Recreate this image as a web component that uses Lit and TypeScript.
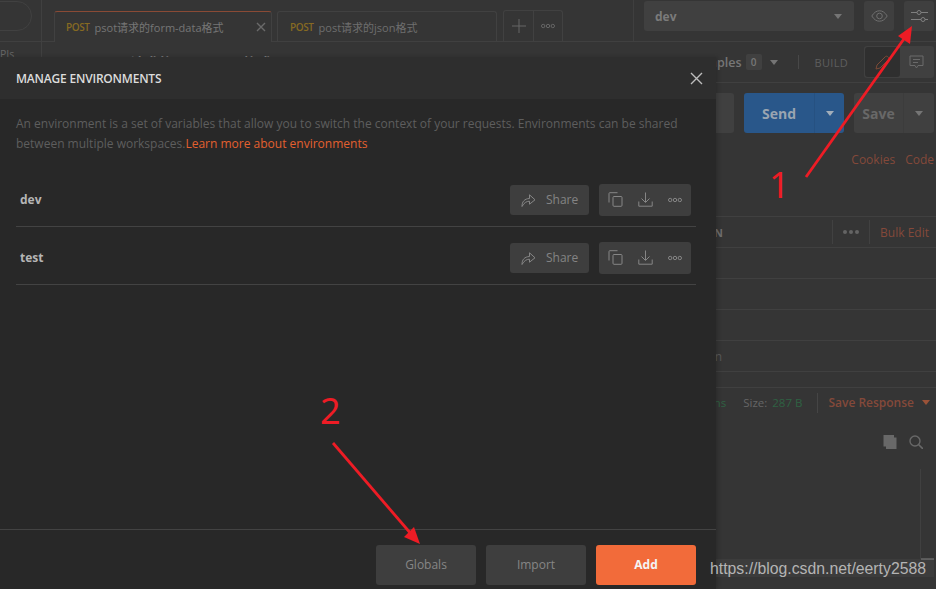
import { LitElement, html, css, svg } from 'lit';
import { customElement } from 'lit/decorators.js';

const icon = (w: number, h: number, body: unknown, cls = '') =>
  html`<svg class=${cls} width=${w} height=${h} viewBox="0 0 ${w} ${h}" fill="none" stroke="currentColor" stroke-width="1">${body}</svg>`;

const shareIcon = () => icon(15, 14, svg`<path d="M1 13.5C1 8.5 3.5 5.8 8.5 5.5V1.8L14 6.8L8.5 11.2V8.2C5.5 8.2 3 9.8 1 13.5Z" stroke-linejoin="round"/>`);
const copyIcon = () => icon(15, 15, svg`<path d="M1 10.5V1.5Q1 .7 1.8 .7H9.5"/><rect x="5" y="4.5" width="9" height="9.8" rx="1"/>`);
const downloadIcon = () => icon(15, 15, svg`<path d="M7.5 .5V10M3.5 6.5L7.5 10.5L11.5 6.5M.8 9.5V14.2H14.2V9.5"/>`);
const dotsIcon = () => icon(14, 6, svg`<circle cx="2.2" cy="3" r="1.7"/><circle cx="7" cy="3" r="1.7"/><circle cx="11.8" cy="3" r="1.7"/>`);
const closeIcon = (s: number) => icon(s, s, svg`<path d="M1 1L${s - 1} ${s - 1}M${s - 1} 1L1 ${s - 1}" stroke-width="1.4"/>`);
const caret = (cls = '') => html`<span class="caret ${cls}"></span>`;

@customElement('app-root')
export class AppRoot extends LitElement {
  static styles = css`
    :host {
      display: block;
      width: 936px;
      height: 589px;
      font-family: 'Open Sans', 'Noto Sans CJK SC', sans-serif;
      font-size: 13px;
      color: #7a7a7a;
    }
    .app {
      position: relative;
      width: 936px;
      height: 589px;
      overflow: hidden;
      background: #353535;
    }

    /* top bar */
    .topbar {
      display: flex;
      height: 41px;
      border-bottom: 1px solid #404040;
      box-sizing: content-box;
    }
    .side-top {
      flex: none;
      width: 42px;
      height: 41px;
      border-right: 1px solid #404040;
      box-sizing: border-box;
      overflow: hidden;
      padding-top: 1px;
    }
    .pill {
      width: 52px;
      height: 30px;
      margin-left: -20px;
      border: 1px solid #414141;
      border-radius: 15px;
      box-sizing: border-box;
    }
    .tabs {
      display: flex;
      align-items: flex-end;
      margin-left: 12px;
      height: 42px;
    }
    .tab {
      display: flex;
      align-items: center;
      height: 30px;
      padding-left: 12px;
      border: 1px solid #414141;
      border-bottom: 0;
      border-radius: 3px 3px 0 0;
      box-sizing: border-box;
      color: #6e6e6e;
      font-size: 11px;
    }
    .tab.active {
      width: 218px;
      padding-left: 11px;
      border-top: 1px solid #8a4a35;
      background: #353535;
      height: 31px;
      color: #757575;
    }
    .tab.other {
      width: 220px;
      margin-left: 5px;
      margin-bottom: 1px;
    }
    .tab .method {
      font-size: 10px;
      font-weight: 600;
      letter-spacing: -0.4px;
      color: #866a22;
      margin-right: 5px;
    }
    .tab .close {
      margin-left: auto;
      margin-right: 5px;
      color: #6a6a6a;
      display: flex;
    }
    .tab-tools {
      display: flex;
      margin: 0 0 1px 6px;
      height: 30px;
      border: 1px solid #414141;
      border-bottom: 0;
      border-radius: 3px 3px 0 0;
      color: #666;
    }
    .tab-tools span {
      width: 29px;
      display: flex;
      align-items: center;
      justify-content: center;
    }
    .tab-tools span + span {
      width: 28px;
      border-left: 1px solid #414141;
    }
    .env-area {
      margin-left: auto;
      display: flex;
      gap: 10px;
      height: 41px;
      padding: 1px 2px 0 10px;
      border-left: 1px solid #3f3f3f;
      box-sizing: border-box;
    }
    .env-select {
      width: 210px;
      height: 30px;
      background: #404040;
      border-radius: 3px;
      display: flex;
      align-items: center;
      justify-content: space-between;
      padding: 0 12px 0 11px;
      box-sizing: border-box;
      font-weight: 700;
      font-size: 12px;
      color: #7b7b7b;
    }
    .env-btn {
      width: 30px;
      height: 30px;
      background: #3f3f3f;
      border-radius: 3px;
      display: flex;
      align-items: center;
      justify-content: center;
      color: #6f6f6f;
    }
    .env-btn.tune {
      color: #7f7f7f;
    }
    .caret {
      display: inline-block;
      width: 0;
      height: 0;
      border-left: 4px solid transparent;
      border-right: 4px solid transparent;
      border-top: 5px solid #757575;
    }
    .caret.orange {
      border-top-color: #9a5238;
    }

    /* main area */
    .lower {
      display: flex;
      height: 547px;
    }
    .side {
      flex: none;
      width: 42px;
      border-right: 1px solid #404040;
      box-sizing: border-box;
      padding-top: 5px;
      font-size: 10.5px;
      color: #666;
    }
    .pane {
      flex: 1;
      display: flex;
      flex-direction: column;
      min-width: 0;
    }
    .meta {
      display: flex;
      align-items: center;
      height: 40px;
      border-bottom: 1px solid #404040;
      padding-right: 2px;
    }
    .req-name {
      margin-left: 58px;
      font-weight: 700;
      font-size: 14px;
      color: #7a7a7a;
    }
    .examples {
      margin-left: auto;
      display: flex;
      align-items: center;
      font-weight: 600;
      color: #777;
      font-size: 12.5px;
    }
    .badge {
      margin-left: 4px;
      width: 16px;
      height: 16px;
      border-radius: 2px;
      background: #404040;
      font-size: 10px;
      line-height: 16px;
      text-align: center;
    }
    .examples .caret {
      margin-left: 8px;
    }
    .meta .sep {
      width: 1px;
      height: 14px;
      background: #484848;
      margin: 0 16px 0 20px;
    }
    .build {
      font-size: 11px;
      color: #5e5e5e;
      letter-spacing: 0.3px;
      margin-right: 16px;
    }
    .toggle {
      display: flex;
      width: 70px;
      height: 32px;
      background: #404040;
      border-radius: 3px;
      color: #6a6a6a;
    }
    .toggle span {
      flex: 1;
      display: flex;
      align-items: center;
      justify-content: center;
      border-radius: 3px;
    }
    .toggle .on {
      background: #2f2f2f;
      margin: 1px 0 1px 1px;
      color: #7c4a36;
    }
    .send-row {
      display: flex;
      justify-content: flex-end;
      gap: 10px;
      height: 40px;
      margin-top: 10px;
      padding-right: 2px;
    }
    .url {
      flex: 1;
      background: #404040;
      border-radius: 3px;
    }
    .split {
      display: flex;
      height: 40px;
      border-radius: 3px;
      font-size: 14px;
      font-weight: 700;
    }
    .split .label {
      display: flex;
      align-items: center;
      justify-content: center;
    }
    .split .drop {
      display: flex;
      align-items: center;
      justify-content: center;
      border-left: 1px solid rgba(0, 0, 0, 0.06);
    }
    .send {
      width: 100px;
      background: #29578a;
      color: #9aa5b1;
    }
    .send .label {
      width: 70px;
    }
    .send .drop {
      flex: 1;
    }
    .send .caret {
      border-top-color: #a2aeba;
    }
    .save {
      width: 80px;
      background: #404040;
      color: #686868;
    }
    .save .label {
      width: 49px;
    }
    .save .drop {
      flex: 1;
    }
    .links {
      display: flex;
      justify-content: flex-end;
      gap: 10px;
      margin-top: 18px;
      height: 18px;
      line-height: 18px;
      padding-right: 2px;
      color: #84493a;
      font-size: 12px;
    }
    .table {
      margin-top: 47px;
      border-top: 1px solid #404040;
    }
    .t-row {
      display: flex;
      align-items: center;
      height: 31px;
      box-sizing: border-box;
      border-bottom: 1px solid #404040;
    }
    .t-desc {
      width: 681px;
      flex: none;
      text-align: right;
      font-size: 11px;
      font-weight: 700;
      color: #6e6e6e;
    }
    .t-ph {
      width: 680px;
      flex: none;
      text-align: right;
      font-size: 12px;
      color: #5a5a5a;
    }
    .t-tools {
      margin-left: auto;
      display: flex;
      align-items: center;
      height: 24px;
      padding-right: 7px;
    }
    .t-tools .dots {
      display: flex;
      gap: 2px;
      padding: 0 10px;
      height: 24px;
      align-items: center;
      border-left: 1px solid #414141;
      border-right: 1px solid #414141;
    }
    .t-tools .dots i {
      width: 4px;
      height: 4px;
      border-radius: 50%;
      background: #646464;
    }
    .bulk {
      margin-left: 10px;
      color: #84493a;
      font-size: 12px;
    }
    .status {
      display: flex;
      align-items: center;
      justify-content: flex-end;
      height: 29px;
      margin-top: 15px;
      border-top: 1px solid #404040;
      font-size: 11.5px;
      padding-right: 6px;
    }
    .status .ok {
      color: #2f6243;
    }
    .status .size {
      margin-left: 17px;
      color: #666;
    }
    .status .num {
      margin-left: 5px;
      color: #2f6243;
    }
    .status .sep {
      width: 1px;
      height: 20px;
      background: #454545;
      margin: 0 10px 0 15px;
    }
    .status .save-resp {
      color: #84493a;
      font-size: 12px;
      margin-right: 8px;
      font-weight: 600;
    }
    .resp-tools {
      display: flex;
      justify-content: flex-end;
      gap: 12px;
      margin-top: 18px;
      padding-right: 13px;
      color: #686868;
    }
    .scroll-wrap {
      display: flex;
      justify-content: flex-end;
      margin-top: 20px;
      padding-right: 15px;
    }
    .scroll {
      width: 1px;
      height: 90px;
      background: #404040;
      position: relative;
    }
    .scroll::after {
      content: '';
      position: absolute;
      left: 1px;
      bottom: -1px;
      width: 13px;
      height: 2px;
      background: #5a5a5a;
    }

    /* modal */
    .modal {
      position: absolute;
      left: 0;
      top: 57px;
      width: 716px;
      height: 532px;
      display: flex;
      flex-direction: column;
      background: #282828;
      box-shadow: 2px 0 4px rgba(0, 0, 0, 0.18);
    }
    .m-head {
      display: flex;
      align-items: center;
      justify-content: space-between;
      flex: none;
      height: 42px;
      background: #2e2e2e;
      padding: 0 13px 0 16px;
    }
    .m-title {
      font-size: 12px;
      font-weight: 600;
      letter-spacing: -0.2px;
      color: #dcdcdc;
    }
    .m-head svg {
      display: block;
      color: #bdbdbd;
    }
    .m-body {
      flex: 1;
      padding: 15px 20px 0 16px;
    }
    .m-desc {
      font-size: 12px;
      line-height: 20px;
      color: #5e5e5e;
      white-space: nowrap;
    }
    .m-desc a {
      color: #e3602f;
    }
    .env-list {
      margin-top: 15px;
    }
    .env-row {
      display: flex;
      align-items: center;
      height: 58px;
      border-bottom: 1px solid #434343;
      box-sizing: border-box;
      padding: 4px 5px 0 4px;
    }
    .env-name {
      font-size: 12px;
      font-weight: 700;
      color: #b5b5b5;
    }
    .share {
      margin-left: auto;
      display: flex;
      align-items: center;
      gap: 10px;
      width: 79px;
      height: 30px;
      padding-left: 11px;
      box-sizing: border-box;
      background: #3e3e3e;
      border-radius: 3px;
      font-size: 12px;
      color: #848484;
    }
    .share svg,
    .group svg {
      color: #868686;
      display: block;
    }
    .group {
      display: flex;
      align-items: center;
      justify-content: space-between;
      width: 92px;
      height: 32px;
      padding: 0 9px;
      box-sizing: border-box;
      margin-left: 10px;
      background: #3e3e3e;
      border-radius: 3px;
    }
    .m-foot {
      flex: none;
      display: flex;
      justify-content: flex-end;
      gap: 10px;
      height: 60px;
      box-sizing: border-box;
      border-top: 1px solid #434343;
      padding: 15px 20px 0 0;
    }
    .f-btn {
      width: 100px;
      height: 40px;
      padding-bottom: 1px;
      box-sizing: border-box;
      border-radius: 3px;
      background: #3e3e3e;
      color: #868686;
      font-size: 12px;
      display: flex;
      align-items: center;
      justify-content: center;
    }
    .f-btn.add {
      background: #f26b3a;
      color: #f4f4f4;
      font-weight: 700;
    }

    /* annotations over the screenshot */
    .marks {
      position: absolute;
      left: 0;
      top: 0;
      pointer-events: none;
    }
    .num-mark {
      position: absolute;
      font-family: 'Noto Sans', sans-serif;
      font-size: 36px;
      line-height: 40px;
      color: #ee1c25;
    }
    .num-1 {
      left: 769px;
      top: 165px;
    }
    .num-2 {
      left: 320px;
      top: 391px;
    }
    .wm {
      position: absolute;
      left: 716px;
      top: 559px;
      width: 218px;
      height: 18px;
      background: rgba(255, 255, 255, 0.035);
    }
    .wm span {
      position: absolute;
      left: -6px;
      top: 0;
      font-family: 'Liberation Sans', Arial, sans-serif;
      font-size: 15.8px;
      line-height: 20px;
      white-space: nowrap;
      color: #b4b4b4;
    }
  `;

  private envRow(name: string) {
    return html`
      <div class="env-row">
        <div class="env-name">${name}</div>
        <div class="share">${shareIcon()}<span>Share</span></div>
        <div class="group">${copyIcon()}${downloadIcon()}${dotsIcon()}</div>
      </div>
    `;
  }

  render() {
    return html`
      <div class="app">
        <div class="topbar">
          <div class="side-top"><div class="pill"></div></div>
          <div class="tabs">
            <div class="tab active">
              <span class="method">POST</span><span>psot请求的form-data格式</span>
              <span class="close">${closeIcon(10)}</span>
            </div>
            <div class="tab other">
              <span class="method">POST</span><span>post请求的json格式</span>
            </div>
            <div class="tab-tools">
              <span>${icon(14, 14, svg`<path d="M7 0V14M0 7H14"/>`)}</span>
              <span>${dotsIcon()}</span>
            </div>
          </div>
          <div class="env-area">
            <div class="env-select"><span>dev</span>${caret()}</div>
            <div class="env-btn">
              ${icon(17, 12, svg`<path d="M.8 6C3 2.4 5.6.8 8.5.8S14 2.4 16.2 6C14 9.6 11.4 11.2 8.5 11.2S3 9.6.8 6Z"/><circle cx="8.5" cy="6" r="2.8"/>`)}
            </div>
            <div class="env-btn tune">
              ${icon(17, 14, svg`<path d="M0 3.5H6M10 3.5H17M0 10.5H10M14 10.5H17"/><circle cx="8" cy="3.5" r="2"/><circle cx="12" cy="10.5" r="2"/>`)}
            </div>
          </div>
        </div>

        <div class="lower">
          <div class="side">PIs</div>
          <div class="pane">
            <div class="meta">
              <span class="req-name">psot请求的form-data格式</span>
              <div class="examples">
                Examples<span class="badge">0</span>${caret()}
              </div>
              <span class="sep"></span>
              <span class="build">BUILD</span>
              <div class="toggle">
                <span class="on">
                  ${icon(15, 15, svg`<path d="M1 14L2 10L10.5 1.5Q11.5 .8 12.6 1.6L13.4 2.4Q14.2 3.5 13.5 4.5L5 13Z"/>`)}
                </span>
                <span>
                  ${icon(15, 14, svg`<path d="M1 1H14V10.5H9L7.5 13L6 10.5H1ZM4 4.5H11M4 7.5H9"/>`)}
                </span>
              </div>
            </div>
            <div class="send-row">
              <div class="url"></div>
              <div class="split send">
                <div class="label">Send</div>
                <div class="drop">${caret()}</div>
              </div>
              <div class="split save">
                <div class="label">Save</div>
                <div class="drop">${caret()}</div>
              </div>
            </div>
            <div class="links"><span>Cookies</span><span>Code</span></div>
            <div class="table">
              <div class="t-row">
                <span class="t-desc">DESCRIPTION</span>
                <div class="t-tools">
                  <span class="dots"><i></i><i></i><i></i></span>
                  <span class="bulk">Bulk Edit</span>
                </div>
              </div>
              <div class="t-row"></div>
              <div class="t-row"></div>
              <div class="t-row"></div>
              <div class="t-row"><span class="t-ph">Description</span></div>
            </div>
            <div class="status">
              <span class="ok">29 ms</span>
              <span class="size">Size:</span><span class="num">287 B</span>
              <span class="sep"></span>
              <span class="save-resp">Save Response</span>${caret('orange')}
            </div>
            <div class="resp-tools">
              ${icon(14, 14, svg`<path d="M3.5 0H11V2.5H13.5V14H3V11.5H.5V0Z" fill="currentColor" stroke="none"/>`)}
              ${icon(14, 14, svg`<circle cx="6" cy="6" r="5" stroke-width="1.4"/><path d="M9.5 9.5L14 14" stroke-width="1.6"/>`)}
            </div>
            <div class="scroll-wrap"><div class="scroll"></div></div>
          </div>
        </div>

        <div class="modal">
          <div class="m-head">
            <span class="m-title">MANAGE ENVIRONMENTS</span>
            ${closeIcon(13)}
          </div>
          <div class="m-body">
            <div class="m-desc">
              An environment is a set of variables that allow you to switch the context of your requests. Environments can be shared<br />between multiple workspaces.<a>Learn more about environments</a>
            </div>
            <div class="env-list">${this.envRow('dev')}${this.envRow('test')}</div>
          </div>
          <div class="m-foot">
            <div class="f-btn">Globals</div>
            <div class="f-btn">Import</div>
            <div class="f-btn add">Add</div>
          </div>
        </div>

        <svg class="marks" width="936" height="589" viewBox="0 0 936 589" fill="none">
          <path d="M806 177L906 36" stroke="#ee1c25" stroke-width="2.8" />
          <path d="M912 26L910 44L898 36Z" fill="#ee1c25" />
          <path d="M333 443L412 535" stroke="#ee1c25" stroke-width="2.8" />
          <path d="M420 544L404 537L414 527Z" fill="#ee1c25" />
        </svg>
        <span class="num-mark num-1">1</span>
        <span class="num-mark num-2">2</span>
        <div class="wm"><span>https://blog.csdn.net/eerty2588</span></div>
      </div>
    `;
  }
}
